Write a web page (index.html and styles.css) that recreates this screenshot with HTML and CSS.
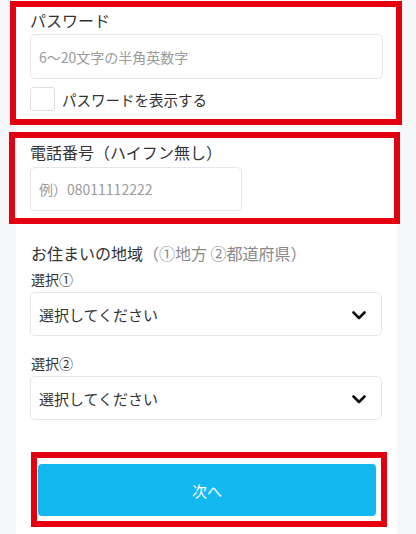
FILE: index.html
```html
<!DOCTYPE html>
<html lang="ja">
<head>
<meta charset="utf-8">
<title>登録フォーム</title>
<link rel="stylesheet" href="styles.css">
</head>
<body>
<div class="card">
  <section class="mark mark-pw">
    <div class="label">パスワード</div>
    <div class="input"><span class="ph">6〜20文字の半角英数字</span></div>
    <label class="check-row"><span class="checkbox"></span><span class="check-text">パスワードを表示する</span></label>
  </section>

  <section class="mark mark-tel">
    <div class="label">電話番号（ハイフン無し）</div>
    <div class="input input-tel"><span class="ph">例）08011112222</span></div>
  </section>

  <section class="region">
    <div class="label region-label">お住まいの地域<span class="sub">（①地方 ②都道府県）</span></div>
    <div class="small-label">選択①</div>
    <div class="select"><span>選択してください</span>
      <svg class="chev" width="14" height="9" viewBox="0 0 14 9"><path d="M1.5 1.5 L7 7 L12.5 1.5" fill="none" stroke="#111" stroke-width="2.6" stroke-linecap="round" stroke-linejoin="round"/></svg>
    </div>
    <div class="small-label gap">選択②</div>
    <div class="select"><span>選択してください</span>
      <svg class="chev" width="14" height="9" viewBox="0 0 14 9"><path d="M1.5 1.5 L7 7 L12.5 1.5" fill="none" stroke="#111" stroke-width="2.6" stroke-linecap="round" stroke-linejoin="round"/></svg>
    </div>
  </section>

  <div class="mark mark-btn">
    <button class="next">次へ</button>
  </div>
</div>
</body>
</html>
```

FILE: styles.css
```css
* { box-sizing: border-box; }
html, body { margin: 0; padding: 0; }
body {
  background: #f5f6f8;
  font-family: "Noto Sans CJK JP", "Noto Sans", Roboto, sans-serif;
  color: #333;
  height: 534px;
  overflow: hidden;
}
.card {
  width: 381px;
  margin-left: 16px;
  background: #fff;
  min-height: 534px;
  padding-top: 1px;
}
.mark { border: 6px solid #e4000f; background: #fff; }
.mark-pw {
  margin: 0 -5px 0 -6px;
  padding: 1px 13px 8px 14px;
}
.mark-tel {
  margin: 7px -3px 0 -7px;
  padding: 2px 13px 7px 15px;
}
.label { font-size: 16px; line-height: 24px; color: #333; }
.input {
  margin-top: 2px;
  height: 45px;
  border: 1px solid #e4e6ea;
  border-radius: 5px;
  background: #fff;
  display: flex;
  align-items: center;
  padding-left: 8px;
}
.mark-tel .input { margin-top: 3px; height: 44px; width: 212px; }
.ph { font-size: 14px; color: #9a9a9a; }
.check-row {
  margin-top: 8px;
  height: 24px;
  display: flex;
  align-items: center;
  gap: 7px;
}
.checkbox {
  width: 25px;
  height: 24px;
  border: 1px solid #dcdee2;
  border-radius: 3px;
  background: #fff;
}
.check-text { font-size: 14.5px; color: #333; }
.region { padding: 0 14px 0 15px; }
.region-label { margin-top: 17px; }
.sub { color: #8a8a8a; }
.small-label { font-size: 14px; line-height: 20px; margin-top: 4px; color: #333; }
.small-label.gap { margin-top: 17px; }
.select {
  margin-top: 3px;
  height: 44px;
  width: 352px;
  margin-left: -1px;
  border: 1px solid #e4e6ea;
  border-radius: 5px;
  display: flex;
  align-items: center;
  justify-content: space-between;
  padding: 0 15px 0 8px;
  font-size: 15px;
  color: #333;
}
.chev { display: block; margin-top: 3px; }
.mark-btn {
  margin: 32px 0 0 15px;
  width: 356px;
  padding: 6px 5px 5px 1px;
}
.next {
  display: block;
  width: 100%;
  height: 52px;
  border: none;
  border-radius: 4px;
  background: #14b8f0;
  color: #fff;
  font-family: inherit;
  font-size: 15px;
}
```
